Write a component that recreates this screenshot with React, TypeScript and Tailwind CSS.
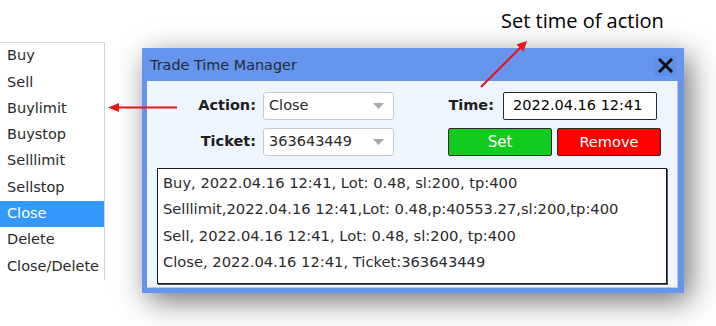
import React from "react";

const items = ["Buy", "Sell", "Buylimit", "Buystop", "Selllimit", "Sellstop", "Close", "Delete", "Close/Delete"];
const logs = [
  "Buy, 2022.04.16 12:41, Lot: 0.48, sl:200, tp:400",
  "Selllimit,2022.04.16 12:41,Lot: 0.48,p:40553.27,sl:200,tp:400",
  "Sell, 2022.04.16 12:41, Lot: 0.48, sl:200, tp:400",
  "Close, 2022.04.16 12:41, Ticket:363643449",
];

function Select({ value }: { value: string }) {
  return (
    <div className="ml-[7px] w-[131px] h-[28px] bg-white border border-[#c6cad1] rounded-[3px] flex items-center justify-between pl-[5px] pr-[9px]">
      <span className="text-[14.5px] text-[#2a2a2a]">{value}</span>
      <svg width="11" height="6" viewBox="0 0 11 6">
        <polygon points="0,0 11,0 5.5,6" fill="#a8a8a8" />
      </svg>
    </div>
  );
}

export default function App() {
  return (
    <div
      className="relative w-[716px] h-[326px] bg-white overflow-hidden flex items-start"
      style={{ fontFamily: '"DejaVu Sans", sans-serif' }}
    >
      {/* dropdown list */}
      <div className="mt-[42px] w-[105px] h-[238px] bg-white border-t border-r border-[#cfd3d8] flex flex-col">
        {items.map((it) => (
          <div
            key={it}
            className={
              it === "Close"
                ? "h-[26.3px] flex items-center pl-[7px] text-[14.5px] bg-[#3399ff] text-white"
                : "h-[26.3px] flex items-center pl-[7px] text-[14.5px] text-[#2a2a2a]"
            }
          >
            {it}
          </div>
        ))}
      </div>

      {/* dialog */}
      <div className="ml-[37px] mt-[48px] w-[542px] h-[245px] bg-[#6595ec] flex flex-col shadow-[6px_8px_28px_rgba(0,0,0,0.55)]">
        <div className="h-[33px] flex items-center justify-between pl-[8px] pr-[8px]">
          <span className="text-[14.4px] text-[#262b36] pt-[2px]">Trade Time Manager</span>
          <div className="w-[22px] h-[20px] bg-[#6090e6] flex items-center justify-center mt-[2px]">
            <svg width="15" height="15" viewBox="0 0 15 15">
              <path d="M2 2 L13 13 M13 2 L2 13" stroke="#111" strokeWidth="3" strokeLinecap="square" />
            </svg>
          </div>
        </div>
        <div className="ml-[5px] mr-[6px] h-[207px] bg-[#eef5fd] border-r border-b border-[#c4c8cd] pt-[11px] pl-[10px] pr-[10px]">
          <div className="flex">
            <div className="w-[237px] flex flex-col gap-[8px]">
              <div className="flex items-center h-[28px]">
                <span className="w-[99px] text-right text-[14.5px] font-bold text-[#1e1e1e]">Action:</span>
                <Select value="Close" />
              </div>
              <div className="flex items-center h-[28px]">
                <span className="w-[99px] text-right text-[14.5px] font-bold text-[#1e1e1e]">Ticket:</span>
                <Select value="363643449" />
              </div>
            </div>
            <div className="ml-[54px] flex flex-col gap-[8px]">
              <div className="flex items-center h-[28px]">
                <span className="w-[46px] text-right text-[14.5px] font-bold text-[#1e1e1e]">Time:</span>
                <div className="ml-[9px] w-[154px] h-[28px] bg-white border border-[#2a2a2a] rounded-[2px] flex items-center pl-[9px]">
                  <span className="text-[14.5px] text-black">2022.04.16 12:41</span>
                </div>
              </div>
              <div className="flex items-center h-[28px] gap-[5px]">
                <div className="w-[104px] h-[28px] bg-[#12cb1f] border border-[#2a2a2a] rounded-[2px] flex items-center justify-center">
                  <span className="text-[15px] text-white">Set</span>
                </div>
                <div className="w-[104px] h-[28px] bg-[#ff0000] border border-[#2a2a2a] rounded-[2px] flex items-center justify-center">
                  <span className="text-[14.6px] text-white">Remove</span>
                </div>
              </div>
            </div>
          </div>
          <div className="mt-[12px] w-[510px] h-[116px] bg-white border border-[#1a1a1a] shadow-[1px_1px_0_#555] pl-[5px] pt-[1px] flex flex-col">
            {logs.map((l) => (
              <div key={l} className="h-[26.3px] flex items-center text-[14.7px] text-[#2a2a2a] whitespace-nowrap">
                {l}
              </div>
            ))}
          </div>
        </div>
      </div>

      {/* annotation text */}
      <div
        className="absolute left-[501px] top-[7px] text-[20px] leading-[28px] text-black whitespace-nowrap"
        style={{ fontFamily: '"Open Sans", sans-serif' }}
      >
        Set time of action
      </div>

      {/* annotation arrows */}
      <svg className="absolute left-0 top-0 pointer-events-none" width="716" height="326" viewBox="0 0 716 326">
        <line x1="177" y1="107.5" x2="116" y2="107.5" stroke="#e8141b" strokeWidth="2" />
        <polygon points="108,107.5 119,103 119,112" fill="#e8141b" />
        <line x1="481" y1="87" x2="521" y2="47" stroke="#e8141b" strokeWidth="2" />
        <polygon points="527,41 523.5,51.5 516.5,44.5" fill="#e8141b" />
      </svg>
    </div>
  );
}
